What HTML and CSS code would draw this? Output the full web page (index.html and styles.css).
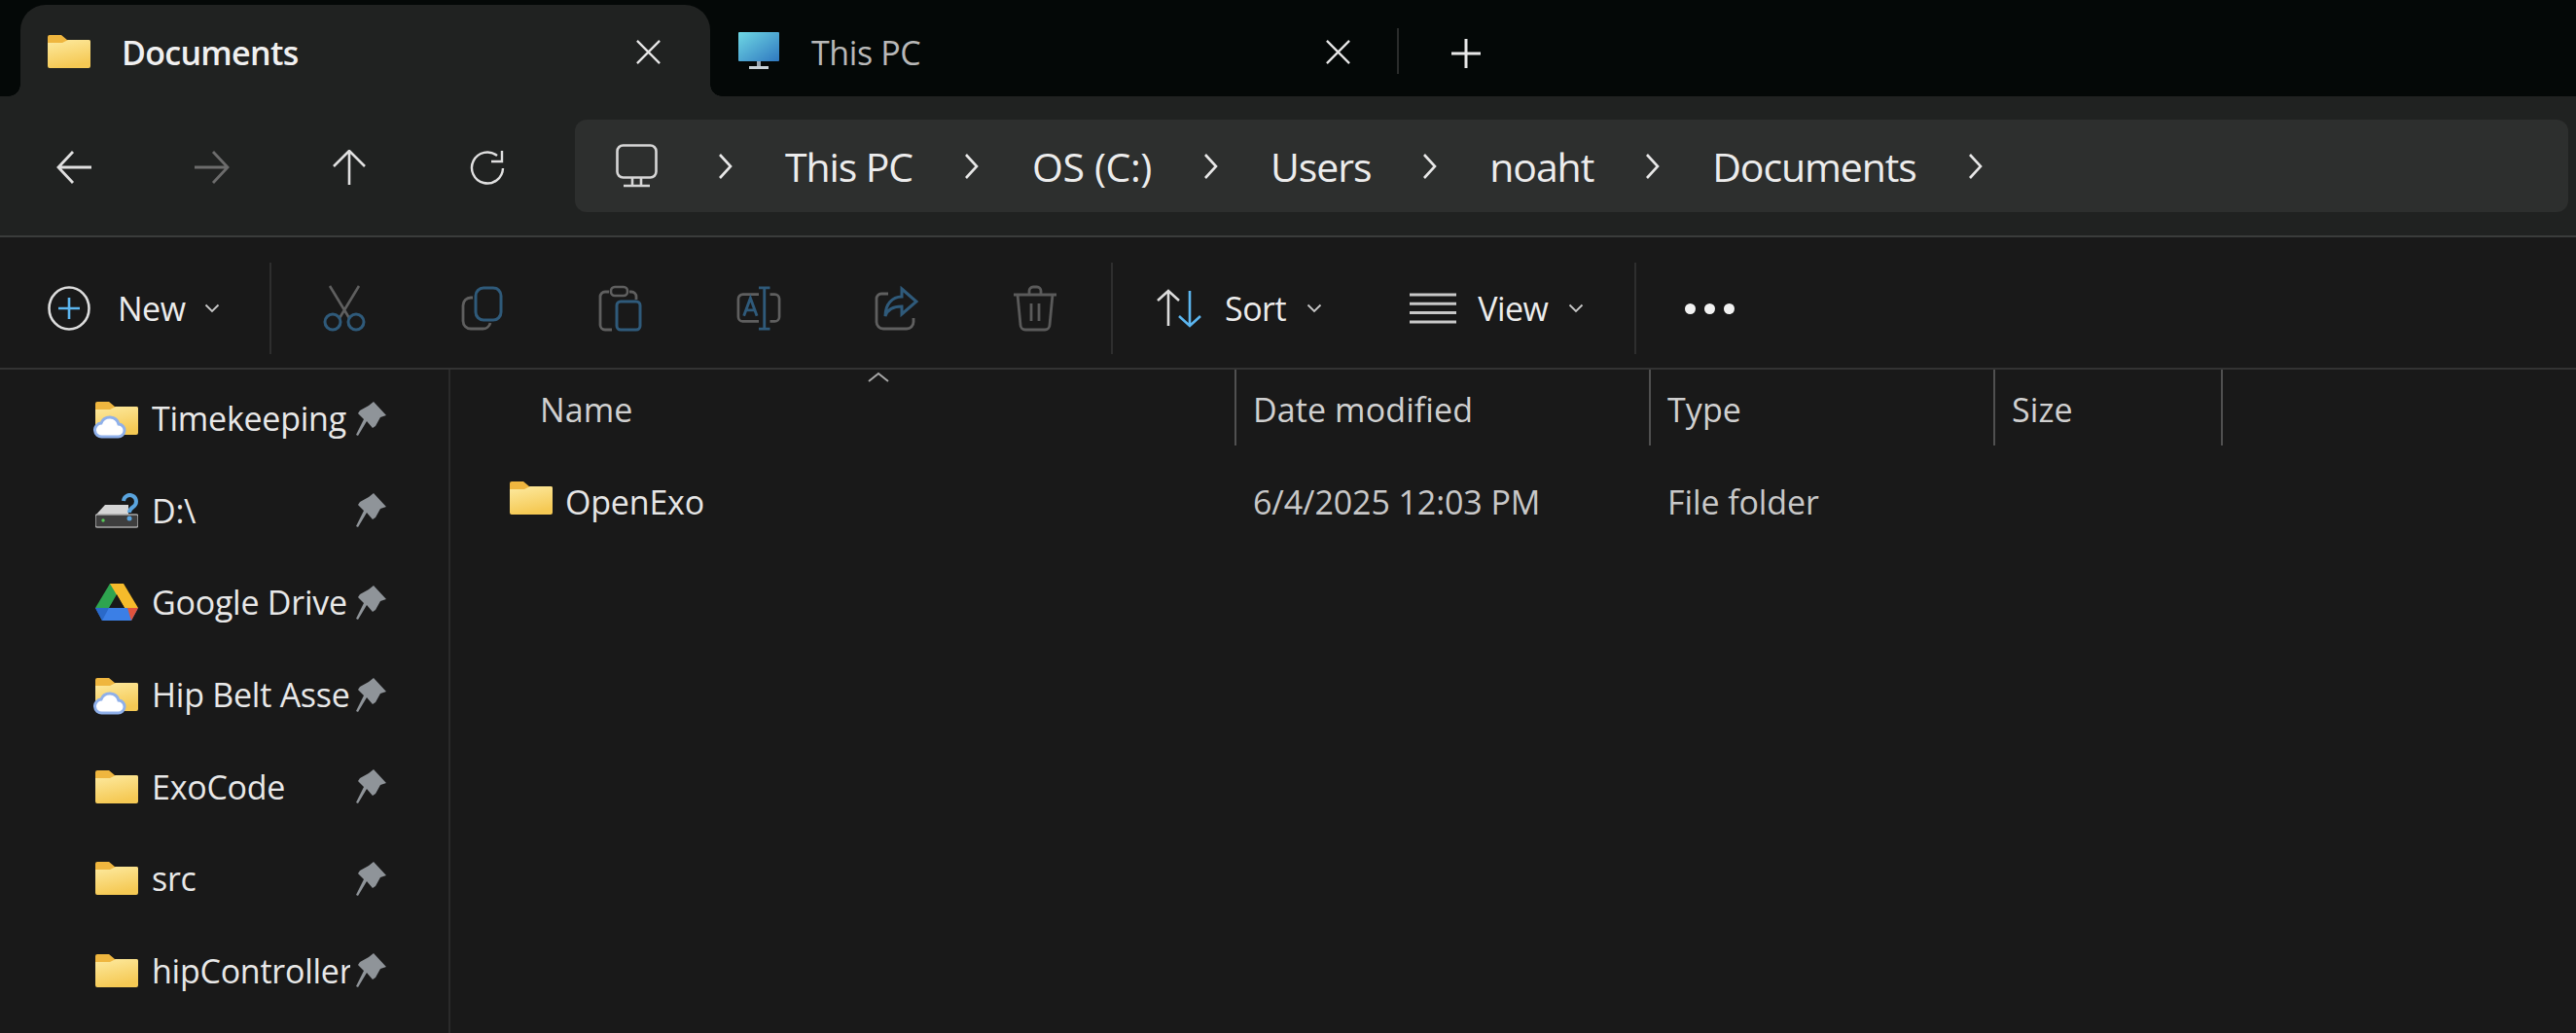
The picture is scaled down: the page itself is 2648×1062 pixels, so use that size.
FILE: index.html
```html
<!DOCTYPE html>
<html lang="en">
<head>
<meta charset="utf-8">
<title>Documents - File Explorer</title>
<link rel="stylesheet" href="styles.css">
</head>
<body>
<svg class="defs" width="0" height="0" aria-hidden="true">
  <defs>
    <linearGradient id="fg" x1="0" y1="0" x2="0.3" y2="1"><stop offset="0" stop-color="#fdeaa0"/><stop offset="1" stop-color="#f5c954"/></linearGradient>
    <linearGradient id="pc" x1="0" y1="0" x2="1" y2="1"><stop offset="0" stop-color="#6fd8e4"/><stop offset="1" stop-color="#2f78c0"/></linearGradient>
    <symbol id="folder" viewBox="0 0 44 34">
      <path d="M0 2a2 2 0 0 1 2-2h12l6 5h22a2 2 0 0 1 2 2v8H0z" fill="#efb63f"/>
      <path d="M0 8h15l6-3h21a2 2 0 0 1 2 2v25a2 2 0 0 1-2 2H2a2 2 0 0 1-2-2z" fill="url(#fg)"/>
    </symbol>
    <symbol id="cloud" viewBox="0 0 34 26">
      <path d="M9 24a7 7 0 0 1-1-14 9.500 9.500 0 0 1 18 1 6.500 6.500 0 0 1-1 13z" fill="#fff" stroke="#8fb0ea" stroke-width="3"/>
    </symbol>
    <symbol id="pin" viewBox="0 0 32 35">
      <path d="M18 0l13 14-6 2-5 9-3 2-6-7-9 15-2-1 8-16-6-6 2-3 9-5z" fill="#8f9499"/>
    </symbol>
    <symbol id="chev" viewBox="0 0 16 28">
      <path d="M2 2l11 12L2 26" fill="none" stroke="#e8e8e8" stroke-width="2.600"/>
    </symbol>
    <symbol id="dn" viewBox="0 0 16 10">
      <path d="M1.500 1.500L8 8l6.500-6.500" fill="none" stroke="#c8c8c8" stroke-width="1.800"/>
    </symbol>
    <symbol id="close" viewBox="0 0 28 28">
      <path d="M2 2l24 24M26 2L2 26" fill="none" stroke="#e6e6e6" stroke-width="2.400"/>
    </symbol>
  </defs>
</svg>

<div class="window">
  <header class="tabstrip">
    <div class="tab tab-active">
      <svg class="tab-folder"><use href="#folder"/></svg>
      <span class="tab-title">Documents</span>
      <svg class="tab-x"><use href="#close"/></svg>
    </div>
    <div class="tab tab-idle">
      <svg class="tab-pc" viewBox="0 0 42 39"><rect width="42" height="30" fill="url(#pc)" rx="1"/><path d="M19 30h4v5h-4z" fill="#9aa7b2"/><path d="M11 35h20v3H11z" fill="#c9d2d8"/></svg>
      <span class="tab-title-idle">This PC</span>
      <svg class="tab-x"><use href="#close"/></svg>
    </div>
    <span class="tab-sep"></span>
    <svg class="tab-plus" viewBox="0 0 30 30"><path d="M15 0v30M0 15h30" stroke="#e8e8e8" stroke-width="3" fill="none"/></svg>
  </header>

  <nav class="navbar">
    <div class="navbtns">
      <svg class="nav-ico" viewBox="0 0 36 36"><path d="M17 2L2 18l15 16M2 18h34" fill="none" stroke="#e0e0e0" stroke-width="2.800"/></svg>
      <svg class="nav-ico nav-off" viewBox="0 0 36 36"><path d="M19 2l15 16-15 16M34 18H0" fill="none" stroke="#6c6c6c" stroke-width="2.800"/></svg>
      <svg class="nav-ico" viewBox="0 0 36 36"><path d="M2 17L18 1l16 16M18 1v35" fill="none" stroke="#e0e0e0" stroke-width="2.600"/></svg>
      <svg class="nav-ico" viewBox="0 0 36 36"><path d="M28 6A16 16 0 1 0 34 19" fill="none" stroke="#e0e0e0" stroke-width="2.400"/><path d="M33 1v11H22" fill="none" stroke="#e0e0e0" stroke-width="2.400"/></svg>
    </div>
    <div class="addressbar">
      <svg class="addr-pc" viewBox="0 0 43 45"><rect x="1.500" y="1.500" width="40" height="33" rx="6" fill="none" stroke="#d6d6d6" stroke-width="2.600"/><path d="M17 35v7M26 35v7M8 43h27" fill="none" stroke="#d6d6d6" stroke-width="2.600"/></svg>
      <svg class="crumb-chev"><use href="#chev"/></svg>
      <span class="crumb">This PC</span>
      <svg class="crumb-chev"><use href="#chev"/></svg>
      <span class="crumb crumb-os">OS (C:)</span>
      <svg class="crumb-chev"><use href="#chev"/></svg>
      <span class="crumb">Users</span>
      <svg class="crumb-chev"><use href="#chev"/></svg>
      <span class="crumb">noaht</span>
      <svg class="crumb-chev"><use href="#chev"/></svg>
      <span class="crumb">Documents</span>
      <svg class="crumb-chev"><use href="#chev"/></svg>
    </div>
  </nav>

  <section class="commandbar">
    <div class="cmd cmd-new">
      <svg class="new-ico" viewBox="0 0 44 46"><ellipse cx="22" cy="23" rx="20.500" ry="21.500" fill="none" stroke="#dcdcdc" stroke-width="2.600"/><path d="M22 12v22M11 23h22" stroke="#5cb6f0" stroke-width="2.600" fill="none"/></svg>
      <span class="cmd-label">New</span>
      <svg class="cmd-dn"><use href="#dn"/></svg>
    </div>
    <span class="cmd-sep"></span>
    <div class="cmd-icons">
      <div class="cmd-slot"><svg class="ico" viewBox="0 0 46 48"><path d="M8 1l20 33M38 1L18 34" stroke="#5f5f5f" stroke-width="2.600" fill="none"/><circle cx="11" cy="38" r="8" fill="none" stroke="#2f5a7a" stroke-width="3"/><circle cx="35" cy="38" r="8" fill="none" stroke="#2f5a7a" stroke-width="3"/></svg></div>
      <div class="cmd-slot"><svg class="ico" viewBox="0 0 46 48"><path d="M13 13h-2a8 8 0 0 0-8 8v16a8 8 0 0 0 8 8h12a8 8 0 0 0 8-6" stroke="#5f5f5f" stroke-width="2.800" fill="none"/><rect x="16" y="3" width="26" height="33" rx="8" fill="none" stroke="#2f5a7a" stroke-width="3"/></svg></div>
      <div class="cmd-slot"><svg class="ico" viewBox="0 0 46 48"><path d="M11 7H7a5 5 0 0 0-5 5v29a5 5 0 0 0 5 5h7M32 7h2a5 5 0 0 1 5 5v3" stroke="#5f5f5f" stroke-width="2.800" fill="none"/><rect x="13" y="2" width="17" height="9" rx="4" fill="none" stroke="#5f5f5f" stroke-width="2.600"/><rect x="19" y="17" width="24" height="29" rx="4" fill="none" stroke="#2f5a7a" stroke-width="3"/></svg></div>
      <div class="cmd-slot"><svg class="ico" viewBox="0 0 48 48"><path d="M24 9H7a5 5 0 0 0-5 5v19a5 5 0 0 0 5 5h17M36 9h5a5 5 0 0 1 5 5v19a5 5 0 0 1-5 5h-5" stroke="#5f5f5f" stroke-width="2.800" fill="none"/><path d="M24 2h12M30 2v44M24 46h12M8 32l7-19 7 19M11 26h8" stroke="#2f5a7a" stroke-width="3" fill="none"/></svg></div>
      <div class="cmd-slot"><svg class="ico" viewBox="0 0 46 48"><path d="M14 9H7a5 5 0 0 0-5 5v24a7 7 0 0 0 7 7h24a7 7 0 0 0 7-7v-4" stroke="#5f5f5f" stroke-width="2.800" fill="none"/><path d="M28 4l15 13-15 13v-8c-9 0-15 4-17 10 0-12 7-20 17-20z" stroke="#2f5a7a" stroke-width="3" fill="none"/></svg></div>
      <div class="cmd-slot"><svg class="ico" viewBox="0 0 46 48"><path d="M1 10h44M17 10V6a4 4 0 0 1 4-4h4a4 4 0 0 1 4 4v4M5 10l3 31a5 5 0 0 0 5 5h20a5 5 0 0 0 5-5l3-31M19 19v18M27 19v18" stroke="#5a5a5a" stroke-width="2.800" fill="none"/></svg></div>
    </div>
    <span class="cmd-sep cmd-sep-b"></span>
    <div class="cmd cmd-sort">
      <svg class="sort-ico" viewBox="0 0 50 40"><path d="M3 12L14 2l11 10M14 2v36" stroke="#dcdcdc" stroke-width="2.600" fill="none"/><path d="M25 28l11 10 11-10M36 38V2" stroke="#5cb6f0" stroke-width="2.600" fill="none"/></svg>
      <span class="cmd-label">Sort</span>
      <svg class="cmd-dn"><use href="#dn"/></svg>
    </div>
    <div class="cmd cmd-view">
      <svg class="view-ico" viewBox="0 0 48 32"><path d="M0 2h48M0 11.300h48M0 20.600h48M0 30h48" stroke="#c8c8c8" stroke-width="3" fill="none"/></svg>
      <span class="cmd-label">View</span>
      <svg class="cmd-dn"><use href="#dn"/></svg>
    </div>
    <span class="cmd-sep cmd-sep-c"></span>
    <div class="dots"><i></i><i></i><i></i></div>
  </section>

  <div class="content">
    <aside class="sidebar">
      <div class="side-row"><span class="side-ico"><svg class="ic-folder"><use href="#folder"/></svg><svg class="ic-cloud"><use href="#cloud"/></svg></span><span class="side-name">Timekeeping</span><svg class="pin"><use href="#pin"/></svg></div>
      <div class="side-row"><span class="side-ico"><svg class="ic-disk" viewBox="0 0 44 36"><path d="M0 23L10 12h24v11z" fill="#d5d5d5"/><rect y="22" width="44" height="13" rx="2" fill="#3e3e3e" stroke="#a8a8a8" stroke-width="1.500"/><circle cx="8" cy="28" r="1.700" fill="#58c858"/><path d="M29 8a6.500 6.500 0 1 1 10 6c-3 2-4 3-4 6" fill="none" stroke="#5aa4de" stroke-width="4"/><circle cx="35" cy="26" r="2.500" fill="#5aa4de"/></svg></span><span class="side-name">D:\</span><svg class="pin"><use href="#pin"/></svg></div>
      <div class="side-row"><span class="side-ico"><svg class="ic-drive" viewBox="0 0 44 38"><path d="M15 0h14l-9 16-6 10-14-1z" fill="#2ea44f"/><path d="M15 0h14l15 25H30z" fill="#f6bb2b"/><path d="M0 25h44l-7 13H7z" fill="#3b7fe6"/><path d="M33 25h11l-7 13z" fill="#e0533d"/><path d="M0 25h14L7 38z" fill="#2a69c9"/><path d="M22 11l8 14H14z" fill="#191919"/></svg></span><span class="side-name">Google Drive</span><svg class="pin"><use href="#pin"/></svg></div>
      <div class="side-row"><span class="side-ico"><svg class="ic-folder"><use href="#folder"/></svg><svg class="ic-cloud"><use href="#cloud"/></svg></span><span class="side-name">Hip Belt Assembly</span><svg class="pin"><use href="#pin"/></svg></div>
      <div class="side-row"><span class="side-ico"><svg class="ic-folder"><use href="#folder"/></svg></span><span class="side-name">ExoCode</span><svg class="pin"><use href="#pin"/></svg></div>
      <div class="side-row"><span class="side-ico"><svg class="ic-folder"><use href="#folder"/></svg></span><span class="side-name">src</span><svg class="pin"><use href="#pin"/></svg></div>
      <div class="side-row"><span class="side-ico"><svg class="ic-folder"><use href="#folder"/></svg></span><span class="side-name">hipController</span><svg class="pin"><use href="#pin"/></svg></div>
    </aside>
    <main class="files">
      <div class="file-head">
        <div class="col col-name">Name<svg class="caret" viewBox="0 0 24 12"><path d="M2 10l10-8 10 8" fill="none" stroke="#a8a8a8" stroke-width="2"/></svg></div>
        <div class="col col-div">Date modified</div>
        <div class="col col-div">Type</div>
        <div class="col col-div col-end">Size</div>
      </div>
      <div class="file-row">
        <div class="cell-name"><svg class="ic-folder"><use href="#folder"/></svg><span class="file-title">OpenExo</span></div>
        <div class="cell">6/4/2025 12:03 PM</div>
        <div class="cell">File folder</div>
        <div class="cell"></div>
      </div>
    </main>
  </div>
</div>
</body>
</html>
```

FILE: styles.css
```css
* { box-sizing: border-box; }
html, body { margin: 0; height: 100%; background: #191919; overflow: hidden; }
body { font-family: "Open Sans", "Noto Sans", sans-serif; color: #e6e6e6; }
.defs { display: block; height: 0; }
.window { display: flex; flex-direction: column; height: 1062px; }

/* tabs */
.tabstrip { height: 99px; background: #040807; display: flex; align-items: flex-end; padding-left: 21px; }
.tab { height: 94px; display: flex; position: relative; }
.tab-active { width: 709px; background: #202221; border-radius: 26px 26px 0 0; padding-left: 28px; }
.tab-active::before, .tab-active::after { content: ""; position: absolute; bottom: 0; width: 12px; height: 12px; }
.tab-active::before { left: -12px; background: radial-gradient(circle at 0 0, #040807 11.500px, #202221 12px); }
.tab-active::after { right: -12px; background: radial-gradient(circle at 100% 0, #040807 11.500px, #202221 12px); }
.tab-folder { width: 44px; height: 34px; margin-top: 31px; }
.tab-title { font-size: 34px; font-weight: 600; letter-spacing: -0.7px; line-height: 44px; margin: 27px 0 0 32px; width: 528px; color: #f0f0f0; }
.tab-x { width: 27px; height: 27px; margin-top: 35px; }
.tab-idle { width: 707px; padding-left: 29px; }
.tab-pc { width: 42px; height: 39px; margin-top: 28px; }
.tab-title-idle { font-size: 34px; letter-spacing: -0.4px; line-height: 44px; margin: 27px 0 0 33px; width: 528px; color: #b8b8b8; }
.tab-sep { width: 2px; height: 47px; background: #2a2c2b; margin: 0 0 23px -1px; }
.tab-plus { width: 30px; height: 30px; margin: 0 0 29px 54px; }

/* nav */
.navbar { height: 145px; background: #202221; display: flex; align-items: flex-start; padding: 24px 8px 0 0; border-bottom: 2px solid #3a3c3b; }
.navbtns { width: 591px; padding: 31px 0 0 58px; display: flex; gap: 105.700px; }
.nav-ico { width: 36px; height: 36px; flex: none; }
.addressbar { flex: 1; height: 95px; background: #2d2f2e; border-radius: 12px; display: flex; align-items: center; gap: 53px; padding-left: 42px; }
.addr-pc { width: 43px; height: 45px; margin-right: 9px; }
.crumb { font-size: 41px; letter-spacing: -1.1px; line-height: 56px; color: #ececec; }
.crumb-os { letter-spacing: -0.4px; margin-left: 1px; }
.crumb-chev { width: 16px; height: 28px; flex: none; }

/* command bar */
.commandbar { height: 136px; padding-top: 12px; background: #191919; display: flex; align-items: center; border-bottom: 2px solid #333; }
.cmd { display: flex; align-items: center; }
.cmd-new { width: 277px; padding-left: 49px; }
.new-ico { width: 44px; height: 46px; margin-right: 28px; }
.cmd-label { font-size: 34px; line-height: 44px; letter-spacing: -0.5px; color: #ececec; }
.cmd-dn { width: 16px; height: 10px; margin-left: 19px; }
.cmd-sep { width: 2px; height: 94px; background: #2e2e2e; flex: none; }
.cmd-icons { display: flex; padding-left: 4px; }
.cmd-slot { width: 142px; display: flex; justify-content: center; }
.ico { width: 46px; height: 48px; }
.cmd-sep-b { margin-left: 7px; }
.cmd-sort { margin-left: 43px; }
.sort-ico { width: 50px; height: 40px; margin-right: 22px; }
.cmd-sort .cmd-dn { margin-left: 21px; }
.cmd-view { margin-left: 90px; }
.view-ico { width: 48px; height: 32px; margin-right: 22px; }
.cmd-view .cmd-dn { margin-left: 21px; }
.cmd-sep-c { margin-left: 52px; }
.dots { display: flex; gap: 9px; margin-left: 50px; }
.dots i { width: 11px; height: 11px; border-radius: 50%; background: #f2f2f2; }

/* content */
.content { flex: 1; display: flex; min-height: 0; }
.sidebar { width: 463px; flex: none; border-right: 2px solid #2a2a2a; padding-top: 3px; }
.side-row { height: 94.600px; display: flex; align-items: center; padding-left: 98px; }
.side-ico { position: relative; width: 44px; height: 38px; flex: none; display: flex; align-items: center; }
.ic-folder { width: 44px; height: 34px; flex: none; }
.ic-cloud { position: absolute; left: -2px; top: 14px; width: 34px; height: 26px; }
.ic-disk { width: 44px; height: 36px; }
.ic-drive { width: 44px; height: 38px; }
.side-name { width: 204px; margin-left: 14px; font-size: 34px; line-height: 44px; letter-spacing: -0.25px; white-space: nowrap; overflow: hidden; color: #e8e8e8; }
.pin { width: 32px; height: 35px; margin-left: 6px; }

.files { flex: 1; min-width: 0; }
.file-head, .file-row { display: grid; grid-template-columns: 806px 426px 354px 236px; }
.file-head { height: 78px; grid-template-rows: 78px; }
.col { font-size: 34px; line-height: 82px; height: 78px; letter-spacing: 0.1px; color: #d0d0d0; padding: 0 0 0 17px; }
.col-name { position: relative; padding-left: 92px; }
.col-div { border-left: 2px solid #505050; }
.col-end { border-right: 2px solid #505050; }
.caret { position: absolute; left: 428px; top: 2px; width: 24px; height: 12px; }
.file-row { height: 94px; align-items: center; margin-top: 7px; }
.cell-name { display: flex; align-items: center; gap: 13px; padding-left: 61px; }
.file-title { font-size: 34px; letter-spacing: -0.2px; line-height: 44px; margin-top: 8px; color: #e6e6e6; }
.cell { font-size: 34px; line-height: 44px; padding-top: 8px; letter-spacing: -0.1px; color: #c8c8c8; padding-left: 19px; }
```
